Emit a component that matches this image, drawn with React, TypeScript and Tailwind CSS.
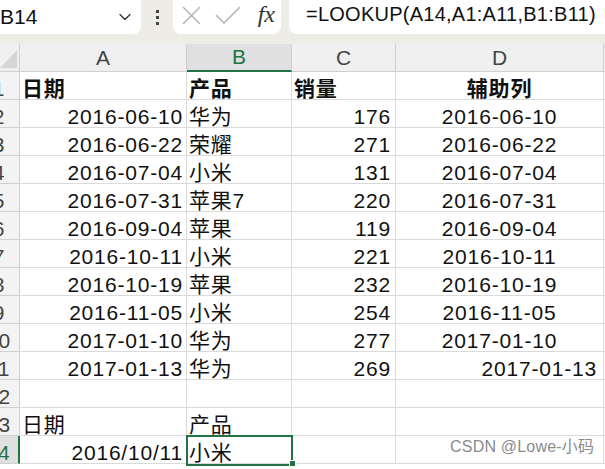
import { ChevronDown } from "lucide-react";

const FONT = {
  fontFamily: '"Liberation Sans", "Noto Sans CJK SC", sans-serif',
};

type Row = {
  n: number;
  a?: string;
  b?: string;
  c?: string;
  d?: string;
  dAlign?: "center" | "right";
  bold?: boolean;
};

const rows: Row[] = [
  { n: 1, a: "日期", b: "产品", c: "销量", d: "辅助列", bold: true },
  { n: 2, a: "2016-06-10", b: "华为", c: "176", d: "2016-06-10" },
  { n: 3, a: "2016-06-22", b: "荣耀", c: "271", d: "2016-06-22" },
  { n: 4, a: "2016-07-04", b: "小米", c: "131", d: "2016-07-04" },
  { n: 5, a: "2016-07-31", b: "苹果7", c: "220", d: "2016-07-31" },
  { n: 6, a: "2016-09-04", b: "苹果", c: "119", d: "2016-09-04" },
  { n: 7, a: "2016-10-11", b: "小米", c: "221", d: "2016-10-11" },
  { n: 8, a: "2016-10-19", b: "苹果", c: "232", d: "2016-10-19" },
  { n: 9, a: "2016-11-05", b: "小米", c: "254", d: "2016-11-05" },
  { n: 10, a: "2017-01-10", b: "华为", c: "277", d: "2017-01-10" },
  { n: 11, a: "2017-01-13", b: "华为", c: "269", d: "2017-01-13", dAlign: "right" },
  { n: 12 },
  { n: 13, a: "日期", b: "产品" },
  { n: 14, a: "2016/10/11", b: "小米" },
];

function isDate(v?: string) {
  return !!v && /^\d/.test(v);
}

export default function App() {
  return (
    <div
      className="relative w-[605px] h-[469px] overflow-hidden bg-white text-[#111]"
      style={FONT}
    >
      {/* Toolbar */}
      <div className="h-[44px] bg-[#eeede5] flex items-start">
        <div className="mt-[-6px] ml-[-8px] w-[149px] h-[40px] bg-white rounded-lg flex items-end pb-[5px] pl-[8px] pr-[6px]">
          <span className="text-[21px] leading-[24px]">B14</span>
          <ChevronDown
            className="ml-auto mb-[2px] text-[#333]"
            size={20}
            strokeWidth={1.6}
          />
        </div>
        <div className="w-[32px] h-[34px] flex flex-col items-center justify-center gap-[3px]">
          <span className="w-[3px] h-[3px] bg-[#444]" />
          <span className="w-[3px] h-[3px] bg-[#444]" />
          <span className="w-[3px] h-[3px] bg-[#444]" />
        </div>
        <div className="mt-[-6px] w-[108px] h-[40px] bg-white rounded-lg flex items-end pb-[8px] pl-[9px] pr-[6px]">
          <svg width="19" height="19" viewBox="0 0 19 19" className="mb-[1px]">
            <path d="M1 1L18 18M18 1L1 18" stroke="#b3b3b3" strokeWidth="1.5" fill="none" />
          </svg>
          <svg width="26" height="18" viewBox="0 0 26 18" className="ml-[14px] mb-[2px]">
            <path d="M1 9L9 17L25 1" stroke="#b3b3b3" strokeWidth="1.5" fill="none" />
          </svg>
          <span
            className="ml-auto text-[24px] leading-[24px] italic text-[#333]"
            style={{ fontFamily: '"Liberation Serif", serif' }}
          >
            fx
          </span>
        </div>
        <div className="ml-[8px] mt-[-6px] flex-1 h-[40px] bg-white rounded-l-lg flex items-end pb-[8px] pl-[17px]">
          <span className="text-[20px] leading-[24px] tracking-[0.25px]">
            =LOOKUP(A14,A1:A11,B1:B11)
          </span>
        </div>
      </div>

      {/* Grid */}
      <div className="ml-[-22px] grid grid-cols-[42px_167px_105px_104px_208px_60px] auto-rows-[28px] text-[21px] tracking-[0.8px]">
        {/* column header */}
        <div className="bg-[#f0f0f0] border-r border-b border-[#d0d0d0] flex items-end justify-end pb-[3px] pr-[2px]">
          <svg width="17" height="18" viewBox="0 0 17 18">
            <polygon points="17,0 17,18 0,18" fill="#d6d6d6" />
          </svg>
        </div>
        {["A", "B", "C", "D", ""].map((l) => (
          <div
            key={l || "e"}
            className={
              l === "B"
                ? "bg-[#e0e0e0] border-r border-[#d0d0d0] border-b-2 border-b-[#217346] flex items-center justify-center text-[#217346] text-[21px] tracking-normal"
                : "bg-[#f0f0f0] border-r border-b border-[#d0d0d0] flex items-center justify-center text-[#444] text-[21px] tracking-normal"
            }
          >
            {l}
          </div>
        ))}

        {rows.map((r) => (
          <Line key={r.n} r={r} />
        ))}
      </div>

      {/* selected cell */}
      <div className="absolute left-[186px] top-[435px] w-[107px] h-[31px] border-2 border-[#217346] pointer-events-none" />
      <div className="absolute left-[289px] top-[460px] w-[7px] h-[7px] bg-[#217346] border border-white" />

      {/* watermark */}
      <div className="absolute left-[450px] top-[436px] text-[16px] leading-[22px] text-[#8a8a8a] tracking-[0.2px]">
        CSDN @Lowe-小码
      </div>
    </div>
  );
}

function Line({ r }: { r: Row }) {
  const sel = r.n === 14;
  const cell =
    "border-r border-b border-[#dadada] flex items-end leading-[21px] whitespace-nowrap overflow-visible";
  return (
    <>
      <div
        className={
          sel
            ? "bg-[#e0e0e0] border-r-2 border-r-[#217346] border-b border-b-[#d0d0d0] flex items-end justify-center leading-[21px] text-[#217346] text-[21px] tracking-normal"
            : "bg-[#f3f3f3] border-r border-b border-[#d0d0d0] flex items-end justify-center leading-[21px] text-[#444] text-[21px] tracking-normal"
        }
      >
        {r.n}
      </div>
      <div
        className={`${cell} ${isDate(r.a) ? "justify-end pr-[3px]" : "pl-[2px]"} ${r.bold ? "font-bold" : ""}`}
      >
        {r.a}
      </div>
      <div className={`${cell} pl-[2px] ${r.bold ? "font-bold" : ""}`}>{r.b}</div>
      <div className={`${cell} ${r.bold ? "pl-[2px] font-bold" : "justify-end pr-[4px]"}`}>{r.c}</div>
      <div
        className={`${cell} ${
          r.dAlign === "right" ? "justify-end pr-[6px]" : "justify-center"
        } ${r.bold ? "font-bold" : ""}`}
      >
        {r.d}
      </div>
      <div className="border-b border-[#dadada]" />
    </>
  );
}
